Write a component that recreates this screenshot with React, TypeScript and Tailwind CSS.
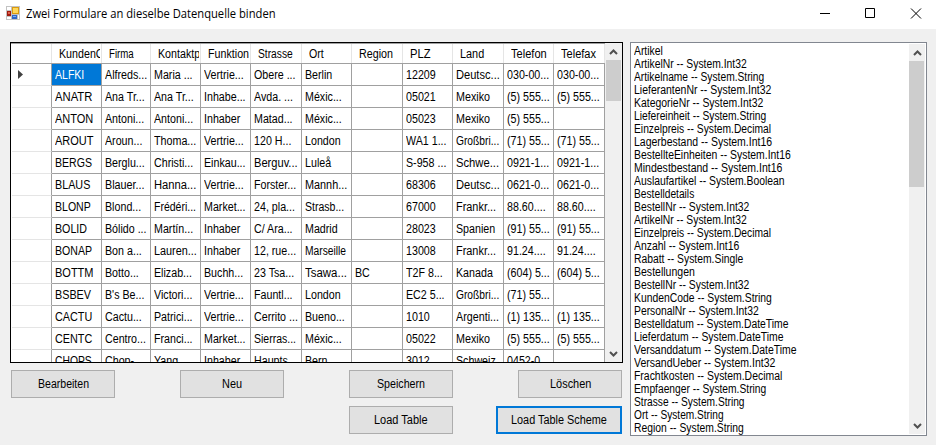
import { useLayoutEffect, useRef } from "react";

/* Text squeezed horizontally: to a pixel width when one is given, else by a fixed ratio. */
function T({ s, w, k = 0.89 }: { s: string; w?: number; k?: number }) {
  const ref = useRef<HTMLSpanElement>(null);
  useLayoutEffect(() => {
    const el = ref.current;
    if (!el) return;
    const ratio = w ? w / el.offsetWidth : k;
    el.style.transform = `scaleX(${ratio})`;
  }, [s, w, k]);
  return (
    <span ref={ref} className="inline-block origin-left whitespace-pre">
      {s}
    </span>
  );
}

const columns: [string, string, number?][] = [
  ["KundenCode", "w-[50px]"],
  ["Firma", "w-[49px]", 25],
  ["Kontaktperson", "w-[50px]"],
  ["Funktion", "w-[50px]", 41],
  ["Strasse", "w-[51px]", 35],
  ["Ort", "w-[50px]", 15],
  ["Region", "w-[51px]", 34],
  ["PLZ", "w-[50px]", 20.5],
  ["Land", "w-[51px]", 24.5],
  ["Telefon", "w-[50px]", 36],
  ["Telefax", "w-[51px]", 35],
];

/* Pixel widths of the cell texts that differ from the default ratio. */
const cellWidths: Record<string, number> = {
  ALFKI: 29,
  ANATR: 37.5,
  ANTON: 38.5,
  AROUT: 38.5,
  BERGS: 37,
  BLAUS: 35,
  BLONP: 36,
  BOLID: 32,
  BONAP: 37,
  BOTTM: 38.5,
  BSBEV: 36,
  CACTU: 37,
  CENTC: 37,
  CHOPS: 37,
  "Alfreds...": 42,
  "Vertrie...": 40,
  "Thoma...": 42,
  "Hanna...": 42,
  "Lauren...": 42.5,
  "Frédéri...": 42,
  "Blauer...": 39.5,
  "Berguv...": 43.5,
  "Sierras...": 42,
  "Mannh...": 42.5,
  "Strasb...": 39.5,
  "Tsawa...": 42,
  "Deutsc...": 43.5,
  "Schwe...": 43,
  "Frankr...": 40,
  "Großbri...": 43.5,
  "Argenti...": 43,
  Marseille: 41,
  Mexiko: 34,
};

const rows: string[][] = [
  ["ALFKI", "Alfreds...", "Maria ...", "Vertrie...", "Obere ...", "Berlin", "", "12209", "Deutsc...", "030-00...", "030-00..."],
  ["ANATR", "Ana Tr...", "Ana Tr...", "Inhabe...", "Avda. ...", "Méxic...", "", "05021", "Mexiko", "(5) 555...", "(5) 555..."],
  ["ANTON", "Antoni...", "Antoni...", "Inhaber", "Matad...", "Méxic...", "", "05023", "Mexiko", "(5) 555...", ""],
  ["AROUT", "Aroun...", "Thoma...", "Vertrie...", "120 H...", "London", "", "WA1 1...", "Großbri...", "(71) 55...", "(71) 55..."],
  ["BERGS", "Berglu...", "Christi...", "Einkau...", "Berguv...", "Luleå", "", "S-958 ...", "Schwe...", "0921-1...", "0921-1..."],
  ["BLAUS", "Blauer...", "Hanna...", "Vertrie...", "Forster...", "Mannh...", "", "68306", "Deutsc...", "0621-0...", "0621-0..."],
  ["BLONP", "Blond...", "Frédéri...", "Market...", "24, pla...", "Strasb...", "", "67000", "Frankr...", "88.60....", "88.60...."],
  ["BOLID", "Bólido ...", "Martín...", "Inhaber", "C/ Ara...", "Madrid", "", "28023", "Spanien", "(91) 55...", "(91) 55..."],
  ["BONAP", "Bon a...", "Lauren...", "Inhaber", "12, rue...", "Marseille", "", "13008", "Frankr...", "91.24....", "91.24...."],
  ["BOTTM", "Botto...", "Elizab...", "Buchh...", "23 Tsa...", "Tsawa...", "BC", "T2F 8...", "Kanada", "(604) 5...", "(604) 5..."],
  ["BSBEV", "B's Be...", "Victori...", "Vertrie...", "Fauntl...", "London", "", "EC2 5...", "Großbri...", "(71) 55...", ""],
  ["CACTU", "Cactu...", "Patrici...", "Vertrie...", "Cerrito ...", "Bueno...", "", "1010", "Argenti...", "(1) 135...", "(1) 135..."],
  ["CENTC", "Centro...", "Franci...", "Market...", "Sierras...", "Méxic...", "", "05022", "Mexiko", "(5) 555...", "(5) 555..."],
  ["CHOPS", "Chop-...", "Yang ...", "Inhaber", "Haupts...", "Bern", "", "3012", "Schweiz", "0452-0...", ""],
];

const schema: [string, number][] = [
  ["Artikel", 28.5],
  ["ArtikelNr -- System.Int32", 113],
  ["Artikelname -- System.String", 130.5],
  ["LieferantenNr -- System.Int32", 137],
  ["KategorieNr -- System.Int32", 129.5],
  ["Liefereinheit -- System.String", 132.5],
  ["Einzelpreis -- System.Decimal", 137],
  ["Lagerbestand -- System.Int16", 138],
  ["BestellteEinheiten -- System.Int16", 157],
  ["Mindestbestand -- System.Int16", 148],
  ["Auslaufartikel -- System.Boolean", 150.5],
  ["Bestelldetails", 60.5],
  ["BestellNr -- System.Int32", 115],
  ["ArtikelNr -- System.Int32", 113],
  ["Einzelpreis -- System.Decimal", 137],
  ["Anzahl -- System.Int16", 105],
  ["Rabatt -- System.Single", 109.5],
  ["Bestellungen", 60.5],
  ["BestellNr -- System.Int32", 115],
  ["KundenCode -- System.String", 137.5],
  ["PersonalNr -- System.Int32", 125],
  ["Bestelldatum -- System.DateTime", 154.5],
  ["Lieferdatum -- System.DateTime", 149.5],
  ["Versanddatum -- System.DateTime", 162.5],
  ["VersandUeber -- System.Int32", 141],
  ["Frachtkosten -- System.Decimal", 148.5],
  ["Empfaenger -- System.String", 132.5],
  ["Strasse -- System.String", 110.5],
  ["Ort -- System.String", 89.5],
  ["Region -- System.String", 109.5],
];

function Arrow({ down = false }: { down?: boolean }) {
  return (
    <div className="flex h-[17px] shrink-0 items-center justify-center">
      <svg width="9" height="6" viewBox="0 0 9 6" fill="none" stroke="#505050" strokeWidth="2">
        <path d={down ? "M1 1 L4.5 4.5 L8 1" : "M1 5 L4.5 1.5 L8 5"} />
      </svg>
    </div>
  );
}

function Button({ label, w, focus = false }: { label: string; w: number; focus?: boolean }) {
  return (
    <button
      className={
        focus
          ? "flex h-[28px] w-[126px] items-center justify-center border-2 border-[#0078d7] bg-[#e1e1e1]"
          : "flex h-[28px] w-[104px] items-center justify-center border border-[#adadad] bg-[#e1e1e1]"
      }
    >
      <span className="block text-left" style={{ width: w }}>
        <T s={label} w={w} />
      </span>
    </button>
  );
}

export default function App() {
  return (
    <div className="flex h-[445px] w-[936px] flex-col overflow-hidden bg-[#f0f0f0] font-['Liberation_Sans',Arial,sans-serif] text-[12px] leading-[13px] text-black">
      <header className="flex h-[29px] shrink-0 items-center bg-white">
        <svg className="mb-[3px] ml-[6px] shrink-0" width="14" height="14" viewBox="0 0 14 14" shapeRendering="crispEdges">
          <rect width="14" height="14" fill="#c3c3c3" />
          <path d="M1 1h4v3H1zM1 11h4v2H1z" fill="#fff" />
          <rect x="1" y="5" width="4" height="5" fill="#a01c10" />
          <rect x="2" y="6" width="2" height="2" fill="#e0604c" />
          <rect x="6" y="1" width="7" height="7" fill="#d99a10" />
          <rect x="7" y="2" width="5" height="5" fill="#ffd75a" />
          <rect x="6" y="9" width="5" height="4" fill="#2f67c8" />
          <rect x="7" y="10" width="3" height="1" fill="#7fb0f5" />
          <rect x="12" y="9" width="1" height="4" fill="#fff" />
        </svg>
        <div className="mb-[1px] ml-[6px] font-['Open_Sans','Noto_Sans',sans-serif] leading-[16px]">
          <T s="Zwei Formulare an dieselbe Datenquelle binden" w={250} />
        </div>
        <svg className="mb-[2px] ml-auto mr-[14px]" width="102" height="11" viewBox="0 0 102 11" fill="none" stroke="#000">
          <path d="M0 5.5h10" />
          <path d="M45.5 .5h9v9h-9z" />
          <path d="M91 .5l10 10M101 .5l-10 10" />
        </svg>
      </header>
      <main className="flex pt-[13px] pl-[10px]">
        <div className="w-[613px]">
          <section className="flex h-[321px] border border-black bg-white">
            <div className="flex w-[594px] flex-col overflow-hidden border-t border-[#a0a0a0] pl-px">
              <div className="flex h-[20px] w-[593px] shrink-0 border-b border-[#a0a0a0]">
                <div className="w-[40px] border-r border-[#e5e5e5]" />
                {columns.map(([name, width, w]) => (
                  <div key={name} className={`${width} shrink-0 border-r border-[#e5e5e5] pt-[4px] pr-px pl-[7px]`}>
                    <div className="overflow-hidden">
                      <T s={name} w={w} k={0.89} />
                    </div>
                  </div>
                ))}
              </div>
              {rows.map((row, r) => (
                <div key={row[0]} className="flex h-[22px] w-[593px] shrink-0">
                  <div className="flex w-[40px] items-center border-r border-b border-r-[#a0a0a0] border-b-[#e5e5e5] pl-[6px]">
                    {r === 0 && (
                      <svg width="5" height="9" viewBox="0 0 5 9">
                        <path d="M0 0L5 4.5L0 9z" fill="#404040" />
                      </svg>
                    )}
                  </div>
                  {row.map((cell, c) => (
                    <div
                      key={c}
                      className={`${columns[c][1]} shrink-0 overflow-hidden border-r border-b border-[#a0a0a0] pl-[3px] pt-[5px] ${
                        r === 0 && c === 0 ? "bg-[#0078d7] text-white" : ""
                      }`}
                    >
                      <T s={cell} w={cellWidths[cell]} />
                    </div>
                  ))}
                </div>
              ))}
            </div>
            <div className="flex w-[17px] flex-col bg-[#f0f0f0]">
              <Arrow />
              <div className="ml-px h-[41px] w-[15px] bg-[#cdcdcd]" />
              <div className="grow" />
              <Arrow down />
            </div>
          </section>
          <div className="mt-[7px] flex justify-between pr-px pl-px">
            <Button label="Bearbeiten" w={51} />
            <Button label="Neu" w={20} />
            <Button label="Speichern" w={48} />
            <Button label="Löschen" w={41} />
          </div>
          <div className="mt-[8px] flex justify-end gap-[43px] pr-px">
            <Button label="Load Table" w={54} />
            <Button label="Load Table Scheme" w={96} focus />
          </div>
        </div>
        <section className="ml-[7px] flex h-[394px] w-[297px] border border-[#828790] bg-white">
          <div className="grow pt-[2px] pl-[3px]">
            {schema.map(([line, w], i) => (
              <div key={i} className="h-[13px]">
                <T s={line} w={w} />
              </div>
            ))}
          </div>
          <div className="my-px mr-px flex w-[16px] flex-col bg-[#f0f0f0]">
            <Arrow />
            <div className="h-[126px] w-[15px] bg-[#cdcdcd]" />
            <div className="grow" />
            <Arrow down />
          </div>
        </section>
      </main>
    </div>
  );
}
